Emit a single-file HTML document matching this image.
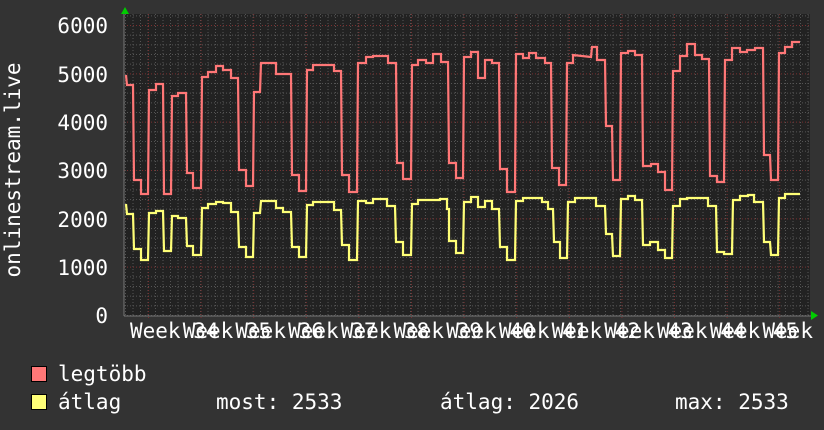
<!DOCTYPE html>
<html><head><meta charset="utf-8"><style>
html,body{margin:0;padding:0;background:#333;}
svg{display:block}
text{font-family:"DejaVu Sans Mono","Liberation Mono",monospace;fill:#fff;font-size:21px}
</style></head><body>
<svg width="824" height="430" viewBox="0 0 824 430" xmlns="http://www.w3.org/2000/svg">
<rect width="824" height="430" fill="#333"/>
<rect x="124" y="14" width="686" height="302" fill="#222"/>
<g stroke="#555" stroke-width="1" stroke-dasharray="1,2" id="g1"></g>
<g stroke="#7a3030" stroke-width="1" stroke-dasharray="1,2" id="g2"></g>
<path id="red" fill="none" stroke="#ff7777" stroke-width="2.2" stroke-linejoin="miter"/>
<path id="yel" fill="none" stroke="#ffff77" stroke-width="2.2"/>
<line x1="124" y1="316" x2="812" y2="316" stroke="#777" stroke-width="1"/>
<line x1="124" y1="12" x2="124" y2="316" stroke="#777" stroke-width="1"/>
<polygon points="121,14 125,7 129,14" fill="#0c0"/>
<polygon points="811,311 818,315.5 811,320" fill="#0c0"/>
<g text-anchor="end">
<text x="108" y="33">6000</text><text x="108" y="82">5000</text><text x="108" y="130">4000</text>
<text x="108" y="178">3000</text><text x="108" y="227">2000</text><text x="108" y="275">1000</text>
<text x="108" y="323">0</text>
</g>
<text transform="translate(20,170) rotate(-90)" text-anchor="middle">onlinestream.live</text>
<g id="wk"></g>
<rect x="31.5" y="366.5" width="15" height="15" fill="#ff7777" stroke="#000"/>
<rect x="31.5" y="394.5" width="15" height="15" fill="#ffff77" stroke="#000"/>
<text x="58" y="381">legtöbb</text>
<text x="58" y="409">átlag</text>
<text x="216" y="409">most: 2533</text>
<text x="440" y="409">átlag: 2026</text>
<text x="675" y="409">max: 2533</text>
</svg>
<script>
var NS="http://www.w3.org/2000/svg";
var g1=document.getElementById('g1'),g2=document.getElementById('g2');
function ln(g,x1,y1,x2,y2){var l=document.createElementNS(NS,'line');l.setAttribute('x1',x1);l.setAttribute('y1',y1);l.setAttribute('x2',x2);l.setAttribute('y2',y2);g.appendChild(l);}
for(var i=0;i<=31;i++){var y=315.5-i*9.667;ln(i%5==0&&i>0?g2:g1,124,y,810,y);}
for(var x=125.5;x<810;x+=7.5){ln(g1,x,14,x,316);}
for(var k=0;k<13;k++){var x=148.5+k*52.6;ln(g2,x,14,x,319);}
var wk=document.getElementById('wk');
for(var k=0;k<13;k++){var x=130+k*52.7;
 var t=document.createElementNS(NS,'text');t.setAttribute('x',x);t.setAttribute('y',338);t.setAttribute('xml:space','preserve');t.textContent='Week '+(34+k);wk.appendChild(t);}
function steps(a){var d='M'+a[0]+','+a[1];for(var i=2;i<a.length;i+=2){d+=' L'+a[i]+','+a[i+1];}return d;}
var red=[126,75,127,85,133,85,134,180,141,180,141,194,148,194,149,90,156,90,156,84,163,84,164,194,171,194,172,96,178,96,178,93,186,93,187,173,193,173,193,188,201,188,202,77,208,77,208,72,216,72,216,66,223,66,223,70,231,70,231,78,238,78,239,170,246,170,246,186,253,186,254,92,260,92,261,63,276,63,276,74,291,74,292,175,299,175,299,191,306,191,307,70,313,70,313,65,334,65,334,71,341,71,342,175,349,175,349,192,357,192,358,63,366,63,366,57,373,57,373,56,388,56,388,63,396,63,397,163,403,163,403,179,411,179,412,65,418,65,418,60,426,60,426,63,433,63,433,54,441,54,441,62,448,62,449,163,456,163,456,178,463,178,464,57,471,57,471,52,478,52,478,78,485,78,485,60,492,60,492,63,499,63,500,169,507,169,507,192,515,192,516,54,523,54,523,58,529,58,529,53,536,53,536,58,545,58,545,63,551,63,552,168,559,168,559,185,566,185,567,63,573,63,573,55,591,57,592,47,597,47,597,60,605,60,606,126,612,126,613,180,620,180,621,53,628,53,628,51,635,51,635,55,642,55,643,166,651,166,651,164,658,164,658,172,665,172,665,190,672,190,673,71,680,71,680,56,687,56,687,44,695,44,695,55,702,55,702,59,709,59,710,176,717,176,717,182,724,182,725,60,732,60,732,48,740,48,740,52,747,52,747,50,755,50,755,48,763,48,764,155,770,155,771,180,778,180,779,53,785,53,785,47,792,47,792,42,800,42];
var yel=[126,204,127,214,133,214,134,249,141,249,141,260,148,260,149,213,156,213,156,211,163,211,164,251,171,251,172,216,178,216,178,218,186,218,187,246,193,246,193,255,201,255,202,208,208,208,208,204,216,204,216,202,223,202,223,203,231,203,231,212,238,212,239,247,246,247,246,257,253,257,254,213,260,213,261,201,276,201,276,208,283,208,283,212,291,212,292,247,299,247,299,257,306,257,307,205,313,205,313,202,334,202,334,210,341,210,342,245,349,245,349,260,357,260,358,201,366,201,366,203,373,203,373,199,387,199,387,206,395,206,396,242,403,242,403,255,411,255,412,204,418,204,418,200,440,200,440,199,447,199,447,209,449,209,449,241,456,241,456,253,463,253,464,202,471,202,471,197,478,197,478,207,485,207,485,201,492,201,492,209,499,209,500,247,507,247,507,260,515,260,516,201,523,201,523,198,542,198,542,202,548,202,548,209,553,209,554,242,560,242,560,258,567,258,568,202,575,202,575,198,596,198,596,206,605,206,606,234,612,234,613,256,620,256,621,199,628,199,628,196,635,196,635,200,642,200,643,245,650,245,650,242,658,242,658,250,665,250,665,258,672,258,673,206,680,206,680,199,687,199,687,198,708,198,708,206,716,206,717,252,724,252,724,254,732,254,733,200,740,200,740,196,748,196,748,195,754,195,754,202,763,202,764,242,770,242,771,255,778,255,779,198,785,198,785,194,800,194];
document.getElementById('red').setAttribute('d',steps(red));
document.getElementById('yel').setAttribute('d',steps(yel));
</script>
</body></html>
